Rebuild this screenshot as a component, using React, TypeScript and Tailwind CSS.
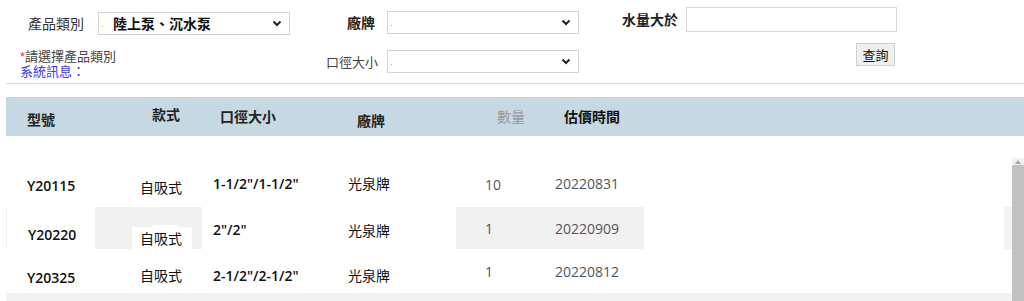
import React from 'react';

const font = "font-['Open_Sans','Noto_Sans_CJK_TC',sans-serif]";

function FakeSelect({ value, className }: { value?: string; className: string }) {
  return (
    <div className={`flex items-center border border-[#d4d4d4] bg-white ${className}`}>
      <span className="ml-[3px] mt-[6px] h-[1px] w-[1px] shrink-0 bg-[#f0a020]" />
      <span className="ml-[10px] flex-1 text-left text-[14px] font-semibold leading-[20px] text-[#111]">{value}</span>
      <svg width="10" height="7" viewBox="0 0 10 7" className="mr-[7px] shrink-0">
        <path d="M1.5 1.5 L5 5 L8.5 1.5" fill="none" stroke="#222" strokeWidth="2" />
      </svg>
    </div>
  );
}

const rows = [
  {
    model: 'Y20115', type: '自吸式', size: '1-1/2"/1-1/2"', brand: '光泉牌', qty: '10', date: '20220831',
    h: 'h-[44px]', off: ['mt-[13px]', 'mt-[15px]', 'mt-[11px]', 'mt-[11px]', 'mt-[12px]', 'mt-[11px]'], alt: false,
  },
  {
    model: 'Y20220', type: '自吸式', size: '2"/2"', brand: '光泉牌', qty: '1', date: '20220909',
    h: 'h-[42px]', off: ['mt-[18px]', 'mt-[20px]', 'mt-[13px]', 'mt-[14px]', 'mt-[12px]', 'mt-[12px]'], alt: true,
  },
  {
    model: 'Y20325', type: '自吸式', size: '2-1/2"/2-1/2"', brand: '光泉牌', qty: '1', date: '20220812',
    h: 'h-[44px]', off: ['mt-[19px]', 'mt-[17px]', 'mt-[17px]', 'mt-[17px]', 'mt-[13px]', 'mt-[13px]'], alt: false,
  },
];

export default function App() {
  return (
    <div className={`w-[1024px] h-[301px] overflow-hidden bg-white text-[#222] ${font}`}>
      {/* Search form */}
      <div className="ml-[6px] flex h-[84px] border-b border-[#dcdcdc]">
        {/* column 1 */}
        <div className="w-[294px]">
          <div className="flex items-center pt-[12px]">
            <span className="ml-[22px] w-[70px] text-[14px] leading-[22px] text-[#333]">產品類別</span>
            <FakeSelect value="陸上泵、沉水泵" className="h-[23px] w-[192px]" />
          </div>
          <div className="ml-[14px] mt-[14px] font-['Liberation_Sans','Noto_Sans_CJK_TC',sans-serif] text-[13px] leading-[15px]">
            <div className="text-[#444]"><span className="text-[#e53935]">*</span>請選擇產品類別</div>
            <div className="text-[#3a3af0]">系統訊息：</div>
          </div>
        </div>
        {/* column 2 */}
        <div className="w-[300px]">
          <div className="flex items-center pt-[11px]">
            <span className="w-[87px] pr-[12px] text-right text-[14px] font-bold leading-[22px] text-[#222]">廠牌</span>
            <FakeSelect className="h-[23px] w-[192px]" />
          </div>
          <div className="flex items-center pt-[16px]">
            <span className="w-[87px] pr-[9px] text-right text-[13px] leading-[22px] text-[#444]">口徑大小</span>
            <FakeSelect className="h-[23px] w-[192px]" />
          </div>
        </div>
        {/* column 3 */}
        <div className="flex-1">
          <div className="flex items-center pt-[7px]">
            <span className="ml-[22px] w-[64px] text-[14px] font-bold leading-[22px] text-[#222]">水量大於</span>
            <div className="h-[25px] w-[211px] border border-[#d8d8d8] bg-white" />
          </div>
          <div className="mt-[11px] flex">
            <button className="ml-[256px] h-[23px] w-[39px] border border-[#d0d0d0] bg-[#efefef] text-[13px] leading-[20px] text-[#111]">
              查詢
            </button>
          </div>
        </div>
      </div>

      {/* Table header */}
      <div className="ml-[6px] mt-[13px] flex h-[39px] bg-[#c6d9e3] text-[14px] leading-[20px]">
        <div className="w-[89px] pl-[21px] pt-[13px] font-bold text-[#222]">型號</div>
        <div className="w-[107px] pl-[57px] pt-[8px] font-semibold text-[#222]">款式</div>
        <div className="w-[134px] pl-[18px] pt-[10px] font-bold text-[#222]">口徑大小</div>
        <div className="w-[120px] pl-[21px] pt-[14px] font-bold text-[#222]">廠牌</div>
        <div className="w-[84px] pl-[41px] pt-[10px] text-[#999]">數量</div>
        <div className="w-[104px] pl-[24px] pt-[10px] font-bold text-[#111]">估價時間</div>
      </div>

      {/* Table body */}
      <div className="flex h-[165px]">
        <div className="ml-[6px] w-[1006px] pt-[27px] text-[14px] leading-[20px]">
          {rows.map((r) => (
            <div key={r.model} className={`flex ${r.h}`}>
              <div className={`w-[89px] pl-[21px] font-semibold text-[#111] ${r.alt ? 'border-l border-[#f0f0f0]' : ''}`}>
                <div className={r.off[0]}>{r.model}</div>
              </div>
              {r.alt ? (
                <div className="flex w-[107px] bg-[#f1f1f1]">
                  <div className="ml-[37px] mt-[18px] flex flex-col">
                    <div className="ml-[21px] h-[18px] w-[25px] bg-white" />
                    <div className="h-[24px] w-[60px] bg-white pl-[8px] pt-[2px] text-[#111]">{r.type}</div>
                  </div>
                </div>
              ) : (
                <div className="w-[107px] pl-[45px] text-[#111]">
                  <div className={r.off[1]}>{r.type}</div>
                </div>
              )}
              <div className="w-[134px] pl-[11px] font-semibold text-[#111]">
                <div className={r.off[2]}>{r.size}</div>
              </div>
              <div className="w-[120px] pl-[12px] text-[#111]">
                <div className={r.off[3]}>{r.brand}</div>
              </div>
              <div className={`w-[84px] pl-[29px] text-[#555] ${r.alt ? 'bg-[#f1f1f1]' : ''}`}>
                <div className={r.off[4]}>{r.qty}</div>
              </div>
              <div className={`w-[104px] pl-[15px] text-[#555] ${r.alt ? 'bg-[#f1f1f1]' : ''}`}>
                <div className={r.off[5]}>{r.date}</div>
              </div>
              <div className="flex-1" />
              <div className={`w-[8px] ${r.alt ? 'bg-[#f4f4f4]' : ''}`} />
            </div>
          ))}
          <div className="h-[8px] bg-[#f2f2f2]" />
        </div>
        {/* scrollbar */}
        <div className="flex w-[12px] flex-col pt-[22px]">
          <div className="flex h-[7px] items-center justify-center bg-[#f1f1f1]">
            <svg width="6" height="4" viewBox="0 0 6 4">
              <path d="M0 4 L3 0 L6 4 Z" fill="#a3a3a3" />
            </svg>
          </div>
          <div className="flex-1 bg-[#c1c1c1]" />
        </div>
      </div>
    </div>
  );
}
